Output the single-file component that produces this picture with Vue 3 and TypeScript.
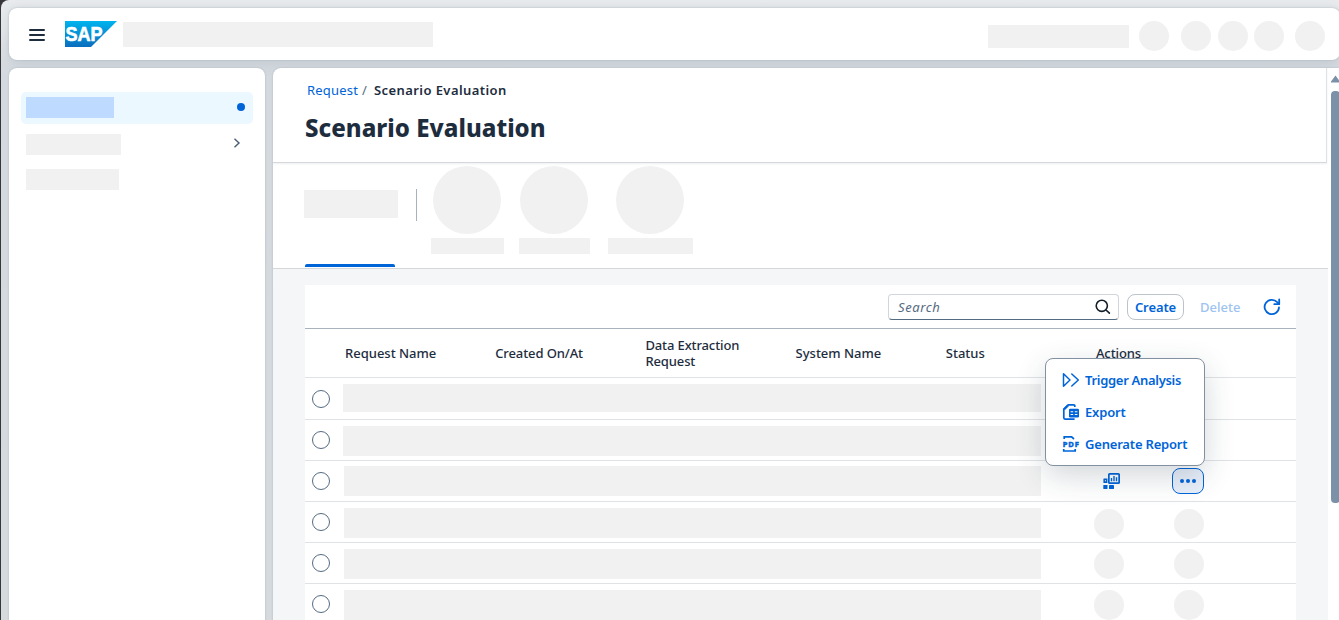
<script setup lang="ts">
interface Column { id: string; label: string }
interface Row { id: number; bar: string; mode: 'none' | 'active' | 'dots' }

const columns: Column[] = [
  { id: 'name', label: 'Request Name' },
  { id: 'created', label: 'Created On/At' },
  { id: 'data', label: 'Data Extraction Request' },
  { id: 'system', label: 'System Name' },
  { id: 'status', label: 'Status' },
  { id: 'actions', label: 'Actions' },
]

const rows: Row[] = [
  { id: 1, bar: 'b1', mode: 'none' },
  { id: 2, bar: 'b2', mode: 'none' },
  { id: 3, bar: 'b3', mode: 'active' },
  { id: 4, bar: 'b4', mode: 'dots' },
  { id: 5, bar: 'b5', mode: 'dots' },
  { id: 6, bar: 'b6', mode: 'dots' },
]
</script>

<template>
  <div class="shell">
    <header class="topbar">
      <svg class="burger" width="16" height="12" viewBox="0 0 16 12"><path d="M1 1H15M1 6H15M1 11H15" stroke="#1d2d3e" stroke-width="2" stroke-linecap="round" /></svg>
      <svg class="logo" width="52" height="26" viewBox="0 0 52 26">
        <defs>
          <linearGradient id="sapBlue" x1="0" y1="0" x2="0" y2="1">
            <stop offset="0" stop-color="#00b4ee" />
            <stop offset="1" stop-color="#0a6ebd" />
          </linearGradient>
        </defs>
        <path d="M0 0H52L26 26H0Z" fill="url(#sapBlue)" />
        <text x="0.6" y="20.4" textLength="37" lengthAdjust="spacingAndGlyphs" class="logo-text">SAP</text>
      </svg>
      <div class="ph product"></div>
      <div class="ph tools"></div>
      <i class="ph disc d1"></i><i class="ph disc d2"></i><i class="ph disc d3"></i><i class="ph disc d4"></i><i class="ph disc d5"></i>
    </header>

    <div class="body">
      <nav class="side">
        <div class="nav selected"><span class="ph n1"></span><i class="dot"></i></div>
        <div class="nav second">
          <span class="ph n2"></span>
          <svg width="8" height="10" viewBox="0 0 8 10"><path d="M1.5 .8L6 5L1.5 9.2" fill="none" stroke="#475e75" stroke-width="1.4" /></svg>
        </div>
        <div class="nav third"><span class="ph n3"></span></div>
      </nav>

      <main class="main">
        <div class="page">
          <section class="heading">
            <div class="crumbs"><a class="link">Request</a><span class="slash">/</span><b class="here">Scenario Evaluation</b></div>
            <h1>Scenario Evaluation</h1>
          </section>
          <section class="tabs">
            <div class="tab-all"><span class="ph"></span><i></i></div>
            <div class="rule"></div>
            <div class="tab t1"><i class="ph"></i><span class="ph"></span></div>
            <div class="tab t2"><i class="ph"></i><span class="ph"></span></div>
            <div class="tab t3"><i class="ph"></i><span class="ph"></span></div>
          </section>
          <section class="content">
            <div class="table">
              <div class="toolbar">
                <div class="search">
                  <span>Search</span>
                  <svg width="16" height="16" viewBox="0 0 16 16" fill="none" stroke="#131e29" stroke-width="1.6" stroke-linecap="round"><circle cx="6.8" cy="6.8" r="5.6" /><path d="M11 11L14.4 14.2" /></svg>
                </div>
                <button class="create">Create</button>
                <span class="delete">Delete</span>
                <svg class="refresh" width="18" height="18" viewBox="0 0 18 18" fill="none" stroke="#0064d9" stroke-width="1.8" stroke-linecap="round" stroke-linejoin="round"><path d="M16 9.5A7.2 7.2 0 1 1 14.2 4.2L16 6" /><path d="M16.2 1.4V6.2H11.3" /></svg>
              </div>
              <div class="thead">
                <div v-for="c in columns" :key="c.id" class="th"><span :class="'h-' + c.id">{{ c.label }}</span></div>
              </div>
              <div v-for="r in rows" :key="r.id" class="row" :class="{ first: r.id === 1 }">
                <i class="radio"></i>
                <span class="ph bar" :class="r.bar"></span>
                <template v-if="r.mode === 'active'">
                  <svg class="analysis" width="17" height="17" viewBox="0 0 17 17" fill="#0064d9">
                    <path fill-rule="evenodd" d="M6.6 0H15.4Q17 0 17 1.6V9.4Q17 11 15.4 11H6.6Q5 11 5 9.4V1.6Q5 0 6.6 0ZM6.7 1.7V9.3H15.3V1.7Z" />
                    <path d="M7.8 5H9.2V8.3H7.8ZM10.3 3H11.7V8.3H10.3ZM12.8 4.2H14.2V8.3H12.8Z" />
                    <path fill-rule="evenodd" d="M1 5.5H4.4V10H1Q.4 10 .4 9.5V6Q.4 5.5 1 5.5ZM1.9 7.3V8.3H3V7.3Z" />
                    <rect x=".3" y="12" width="4.2" height="4" rx=".4" /><rect x="6" y="12" width="5" height="4" rx=".4" />
                  </svg>
                  <button class="more"><i></i><i></i><i></i></button>
                </template>
                <template v-if="r.mode === 'dots'">
                  <i class="ph disc a1" :class="'y' + r.id"></i><i class="ph disc a2" :class="'y' + r.id"></i>
                </template>
              </div>
            </div>
          </section>
        </div>
        <div class="scroll">
          <svg width="9" height="8" viewBox="0 0 9 8"><path d="M4.5 .5L9 6.5V7.5H0V6.5Z" fill="#7b91a8" /></svg>
          <div class="thumb"></div>
        </div>
      </main>
    </div>

    <div class="menu">
      <div class="item">
        <svg width="18" height="16" viewBox="0 0 18 16" fill="none" stroke="#0064d9" stroke-width="1.5" stroke-linejoin="round" stroke-linecap="round"><path d="M1.5 1.8V14.2L8 8Z" /><path d="M9.8 2L16.3 8L9.8 14" /></svg>
        <span class="m1">Trigger Analysis</span>
      </div>
      <div class="item">
        <svg width="18" height="16" viewBox="0 0 18 16" fill="none" stroke="#0064d9" stroke-width="1.7" stroke-linecap="butt">
          <path d="M12.8 3V1.8Q12.8 .9 11.8 .9H6.3L1.8 5.2V13.8Q1.8 15.1 3 15.1H12.6" /><path d="M6 1.5L2.2 5.3" stroke-width="2.2" />
          <rect x="7" y="4.8" width="10" height="8.6" rx="1.2" fill="#0064d9" stroke="none" />
          <path d="M8.6 7.7H11.2M12.8 7.7H15.4M8.6 10.5H11.2M12.8 10.5H15.4" stroke="#fff" stroke-width="1.1" />
        </svg>
        <span class="m2">Export</span>
      </div>
      <div class="item">
        <svg width="18" height="16" viewBox="0 0 18 16" fill="none" stroke="#0064d9" stroke-width="1.7" stroke-linecap="butt">
          <path d="M2.2 3V.9H9.6L12 3M1.7 13V15H13.2V13" />
          <text x=".7" y="10.8" textLength="16.2" lengthAdjust="spacing" class="pdf">PDF</text>
        </svg>
        <span class="m3">Generate Report</span>
      </div>
    </div>
  </div>
</template>

<style>
body { background: #37363a; overflow: hidden; }
</style>

<style scoped>
* { box-sizing: border-box; }
.shell { position: relative; width: 1338px; height: 620px; margin-left: 1px; padding: 8px 0 0 8px; border-radius: 8px 0 0 0; overflow: hidden; background: linear-gradient(180deg, #e9ebed 0, #e6e9eb 30px, #d3d9de 75px, #d5dadd 100%); font-family: "Noto Sans", sans-serif; font-size: 13px; color: #1d2d3e; }
.ph { display: block; flex: none; background: #f1f1f1; }
.disc { width: 30px; height: 30px; border-radius: 50%; }
.topbar { display: flex; align-items: center; width: 1331px; height: 52px; padding-left: 20px; border-radius: 8px; background: #fff; box-shadow: 0 0 2px #a8b3bd, 0 3px 14px rgba(85, 107, 130, .2); }
.topbar > * { flex: none; }
.burger { margin-top: 2px; }
.logo { margin-left: 20px; }
.logo-text { font: 700 21px "Liberation Sans", sans-serif; fill: #fff; stroke: #fff; stroke-width: .7px; }
.product { width: 310px; height: 25px; margin: 1px 0 0 6px; }
.tools { width: 141px; height: 23px; margin: 4px 0 0 555px; }
.topbar .disc { margin-top: 4px; }
.d1 { margin-left: 10px; } .d2 { margin-left: 12px; } .d3 { margin-left: 7px; } .d4 { margin-left: 6px; } .d5 { margin-left: 11px; }
.body { display: flex; gap: 8px; height: 560px; margin-top: 8px; }
.side { flex: none; width: 256px; padding: 24px 12px 0; border-radius: 8px 8px 0 0; background: #fff; box-shadow: 0 0 2px #a8b3bd; }
.nav { display: flex; align-items: center; justify-content: space-between; padding-left: 5px; }
.selected { height: 32px; padding-right: 8px; border-radius: 5px; background: #ebf8ff; }
.n1 { width: 88px; height: 21px; margin-top: -1px; background: #bedbff; }
.dot { width: 8px; height: 8px; margin-top: -2px; border-radius: 50%; background: #0064d9; }
.second { height: 21px; margin-top: 10px; padding-right: 12px; }
.second svg { margin-top: -3px; }
.n2 { width: 95px; height: 21px; }
.third { margin-top: 14px; }
.n3 { width: 93px; height: 21px; }
.main { display: flex; flex: none; width: 1066px; border-radius: 8px 0 0 0; overflow: hidden; background: #fff; box-shadow: 0 0 2px #a8b3bd; }
.page { width: 1055px; height: 552px; flex: none; }
.heading { width: 1054px; height: 95px; padding: 12px 0 0 32px; border-right: 1px solid #dfe1e3; border-bottom: 1px solid #d5d8db; box-shadow: 0 1px 2px rgba(34, 53, 72, .08); }
.crumbs { display: flex; height: 20px; padding-left: 2px; line-height: 20px; white-space: nowrap; }
.link { color: #0064d9; width: 55px; letter-spacing: .2px; }
.slash { width: 12px; color: #556b82; }
.here { font-weight: 600; letter-spacing: .42px; }
h1 { margin: 10px 0 0; font-size: 24px; line-height: 36px; font-weight: 800; letter-spacing: .03px; white-space: nowrap; }
.tabs { display: flex; height: 106px; padding-left: 31px; border-bottom: 1px solid #d5d8db; }
.tab-all { display: flex; flex-direction: column; justify-content: space-between; width: 94px; padding-top: 27px; }
.tab-all span { width: 94px; height: 28px; }
.tab-all i { width: 90px; height: 3px; margin: 0 0 1px 1px; border-radius: 2px 2px 0 0; background: #0064d9; }
.rule { width: 1px; height: 32px; margin: 26px 0 0 18px; background: #a8b2bd; }
.tab { display: flex; flex-direction: column; align-items: center; padding-top: 3px; }
.tab i { width: 68px; height: 68px; margin-right: 1px; border-radius: 50%; }
.tab span { height: 16px; margin-top: 4px; }
.t1 { margin-left: 14px; } .t1 span { width: 73px; }
.t2 { margin-left: 15px; } .t2 span { width: 71px; }
.t3 { margin-left: 18px; } .t3 span { width: 85px; }
.content { height: 351px; padding: 16px 32px 0; background: #f5f6f7; }
.table { width: 991px; background: #fff; }
.toolbar { display: flex; align-items: center; height: 44px; padding-left: 583px; border-bottom: 1px solid #a8b3bd; }
.toolbar > * { flex: none; }
.search { display: flex; align-items: center; justify-content: space-between; width: 231px; height: 26px; margin-top: 1px; padding: 0 7px 0 9px; border: 1px solid #d0d6dc; border-bottom: 1px solid #556b82; border-radius: 4px; font-style: italic; letter-spacing: .6px; color: #556b82; }
.create { width: 57px; height: 26px; margin: 1px 0 0 8px; padding: 0; border: 1px solid #bcc3ca; border-radius: 8px; background: #fff; color: #0064d9; font: 600 13px "Noto Sans", sans-serif; letter-spacing: -.1px; }
.delete { width: 40px; margin: 1px 0 0 16px; color: #9dc3f0; font-weight: 500; white-space: nowrap; }
.refresh { margin: 1px 0 0 23px; }
.thead { display: grid; grid-template-columns: repeat(6, 150.2px); height: 49px; padding-left: 40px; align-items: center; line-height: 16px; border-bottom: 1px solid #e0e3e5; font-weight: 500; }
.th { width: 120px; }
.h-created { letter-spacing: -.1px; }
.h-data { letter-spacing: -.12px; }
.h-actions { letter-spacing: -.1px; }
.row { display: flex; height: 41px; padding-left: 7px; border-bottom: 1px solid #e0e3e5; }
.row.first { height: 42px; }
.row > * { flex: none; }
.radio { width: 18px; height: 18px; margin-top: 11px; border: 1px solid #556b82; border-radius: 50%; }
.first .radio { margin-top: 12px; }
.bar { width: 697px; height: 30px; margin: 5px 0 0 14px; }
.b1 { width: 698px; height: 28px; margin: 6px 0 0 13px; }
.b2 { width: 698px; margin: 6px 0 0 13px; }
.b4 { margin-top: 6px; } .b5 { margin-top: 6px; } .b6 { margin-top: 6px; }
.analysis { margin: 12px 0 0 62px; }
.more { display: flex; gap: 2px; align-items: center; justify-content: center; width: 32px; height: 26px; margin: 7px 0 0 52px; padding: 0; border: 1px solid #0064d9; border-radius: 8px; background: #e8effa; }
.more i { width: 4px; height: 4px; border-radius: 50%; background: #0064d9; }
.a1 { margin-left: 53px; } .a2 { margin-left: 50px; }
.y4 { margin-top: 7px; } .y5 { margin-top: 6px; } .y6 { margin-top: 6px; }
.scroll { width: 11px; padding: 7px 0 0 3px; overflow: hidden; }
.scroll svg { display: block; }
.thumb { width: 9px; height: 412px; margin-top: 8px; border-radius: 4px; background: #7b91a8; }
.menu { position: absolute; left: 1044px; top: 358px; width: 160px; height: 108px; padding: 5px 0 0 16px; border: 1px solid #8390a0; border-radius: 8px; background: #fff; box-shadow: 0 10px 30px rgba(34, 53, 72, .2); color: #0064d9; font-weight: 600; }
.item { display: flex; align-items: center; gap: 5px; height: 32px; white-space: nowrap; }
.item svg { flex: none; }
.m1 { letter-spacing: -.3px; }
.m2 { letter-spacing: -.15px; }
.m3 { letter-spacing: -.19px; }
.pdf { font: 700 7.6px "Noto Sans", sans-serif; fill: #0064d9; stroke: #0064d9; stroke-width: .5px; }
</style>
